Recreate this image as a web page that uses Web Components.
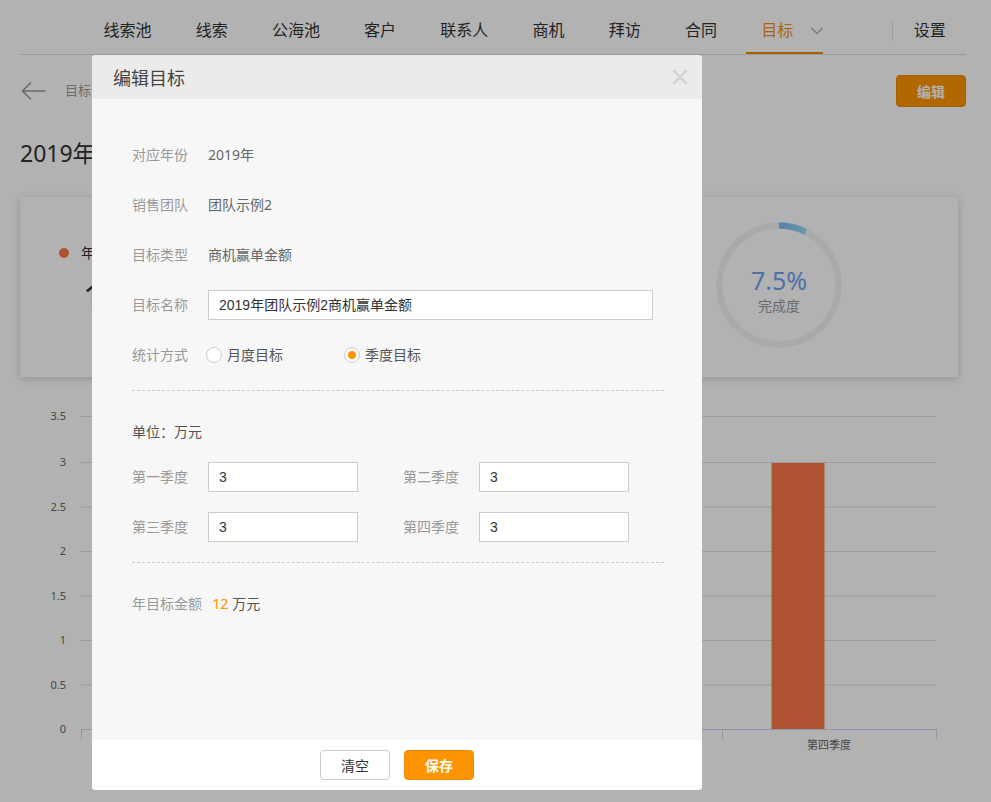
<!DOCTYPE html>
<html lang="zh-CN"><head><meta charset="utf-8"><title>目标</title>
<style>
html,body{margin:0;padding:0;background:#fff}
body{font-family:"Noto Sans","Noto Sans CJK SC",sans-serif;color:#333;width:991px;height:802px;overflow:hidden;position:relative}
</style></head><body>
<crm-page>
  <crm-nav slot="nav">
    <nav-item>线索池</nav-item><nav-item>线索</nav-item><nav-item>公海池</nav-item><nav-item>客户</nav-item><nav-item>联系人</nav-item><nav-item>商机</nav-item><nav-item>拜访</nav-item><nav-item>合同</nav-item><nav-item active>目标</nav-item>
  </crm-nav>
  <page-head></page-head>
  <summary-card></summary-card>
  <bar-chart></bar-chart>
</crm-page>
<modal-dialog heading="编辑目标">
  <form-row label="对应年份"><span class="v">2019年</span></form-row>
  <form-row label="销售团队"><span class="v">团队示例2</span></form-row>
  <form-row label="目标类型"><span class="v">商机赢单金额</span></form-row>
  <form-row label="目标名称"><text-field width="445" value="2019年团队示例2商机赢单金额"></text-field></form-row>
  <form-row label="统计方式"><radio-group></radio-group></form-row>
  <dash-line></dash-line>
  <unit-line>单位：万元</unit-line>
  <quarter-row a="第一季度" b="第二季度"></quarter-row>
  <quarter-row a="第三季度" b="第四季度"></quarter-row>
  <dash-line></dash-line>
  <total-line></total-line>
</modal-dialog>
<script>
const def=(name,html)=>customElements.define(name,class extends HTMLElement{
  connectedCallback(){ if(this.shadowRoot) return;
    const r=this.attachShadow({mode:"open"});
    r.innerHTML=typeof html==="function"?html(this):html;
  }
});
const FONT='"Noto Sans","Noto Sans CJK SC",sans-serif';
def("crm-page",`<style>:host{display:block;width:991px;height:802px;box-sizing:border-box;padding:0 25px 0 20px;overflow:hidden}
</style><slot name="nav"></slot><slot></slot>`);
def("crm-nav",`<style>:host{display:flex;align-items:stretch;height:54px;width:946px;box-sizing:content-box;border-bottom:1px solid #dcdcdc;font-size:16px;color:#333}
.items{display:flex;gap:44.2px;padding-left:83.5px}
.sep{width:1px;height:20px;background:#e6e6e6;align-self:center;margin-left:98.5px;margin-top:8px}
.set{align-self:center;margin-left:21px;margin-top:6px;line-height:24px;color:#333}
</style><div class="items"><slot></slot></div><div class="sep"></div><div class="set">设置</div>`);
def("nav-item",el=>{const a=el.hasAttribute("active");return `<style>:host{display:block;position:relative;font-size:16px;line-height:24px;padding-top:18px;color:${a?"#f7911c":"#333"}}
${a?`.u{position:absolute;left:-15.5px;width:77px;bottom:0;height:2px;background:#f08a00}.c{position:absolute;left:49px;top:27px}`:""}
:host{height:54px;box-sizing:border-box}</style><slot></slot>${a?`<svg class="c" width="14" height="8" viewBox="0 0 14 8"><path d="M1.5 1 L7 6.5 L12.5 1" fill="none" stroke="#aaa" stroke-width="1.2"/></svg><div class="u"></div>`:""}`});
def("page-head",`<style>:host{display:block;position:relative;height:122px}
.row{display:flex;align-items:center;height:32px;margin-top:20px}
svg{display:block;margin-left:1px}
.crumb{font-size:13px;line-height:18px;color:#999;margin:-2px 0 0 19px}
.sp{flex:1}
.btn{width:70px;height:32px;box-sizing:border-box;border:1px solid #f08a00;border-radius:4px;background:#fe9500;color:#fff;font-size:14px;font-weight:700;display:flex;align-items:center;justify-content:center}
h1{margin:0;font-weight:400;font-size:23px;line-height:32px;color:#333;margin-top:30px}
</style><div class="row"><svg width="25" height="20" viewBox="0 0 25 20"><path d="M24.5 10H1.5M10 1.5L1.5 10L10 18.5" fill="none" stroke="#999" stroke-width="1.6"/></svg><span class="crumb">目标</span><span class="sp"></span><div class="btn">编辑</div></div>
<h1>2019年</h1>`);
def("summary-card",`<style>:host{display:flex;width:938px;height:180px;box-sizing:border-box;background:#fff;box-shadow:0 2px 8px rgba(0,0,0,.18);position:relative}
.left{width:696px;padding:44px 0 0 39px;box-sizing:border-box}
.lbl{display:flex;align-items:center;gap:12px;font-size:14px;line-height:24px;color:#333}
.dot{width:10px;height:10px;border-radius:50%;background:#fb7848}
.num{font-size:34px;line-height:44px;color:#333;margin:10px 0 0 24px}
</style><div class="left"><div class="lbl"><span class="dot"></span>年</div><div class="num">1</div></div><progress-ring></progress-ring>`);
def("progress-ring",`<style>:host{display:block;position:relative;width:126px;height:126px;margin-top:24.5px}
svg{display:block}
.t{position:absolute;left:0;right:0;top:43px;text-align:center;font-size:25px;line-height:30px;color:#6fa4ee}
.s{position:absolute;left:0;right:0;top:73px;text-align:center;font-size:14px;line-height:22px;color:#999}
</style><svg width="126" height="126" viewBox="0 0 126 126"><defs><linearGradient id="g" x1="0" x2="1"><stop offset="0" stop-color="#7fb8f5"/><stop offset="1" stop-color="#96d8f5"/></linearGradient></defs>
<circle cx="63" cy="63" r="59.5" fill="none" stroke="#f3f3f3" stroke-width="6.5"/>
<path d="M63 3.5A59.5 59.5 0 0 1 89.7 9.8" fill="none" stroke="url(#g)" stroke-width="6.5"/></svg>
<div class="t">7.5%</div><div class="s">完成度</div>`);
def("bar-chart",()=>{
 const ys=[729,684.5,640,595.5,551,506.5,462,416],ls=["0","0.5","1","1.5","2","2.5","3","3.5"];
 const gx=ys.slice(1).map(y=>`<line x1="61" x2="916" y1="${y-396.5}" y2="${y-396.5}" stroke="#e0e0e0"/>`).join("");
 const tx=ys.map((y,i)=>`<text x="46" y="${y-396.5+3.5}" text-anchor="end">${ls[i]}</text>`).join("");
 const labels=`<text x="809" y="352" text-anchor="middle">第四季度</text>`;
 const bars=`<rect x="751.5" y="66" width="53" height="266" fill="#fb7848"/>`;
 const ticks=[61.5,702.5,916.5].map(x=>`<line x1="${x}" x2="${x}" y1="332" y2="342" stroke="#ccd6eb"/>`).join("");
 return `<style>:host{display:block;margin:19.5px 0 0 0;height:380px}svg{display:block;overflow:visible}text{font-family:${FONT};font-size:11px;fill:#666}</style>
 <svg width="938" height="380" viewBox="0 0 938 380">${gx}${bars}<line x1="61" x2="917" y1="332.5" y2="332.5" stroke="#ccd6eb"/>${ticks}${tx}${labels}</svg>`});
def("modal-dialog",el=>`<style>:host{display:block;position:fixed;inset:0;background:rgba(0,0,0,.3)}
.box{position:absolute;left:92px;top:55px;width:610px;height:735px;border-radius:4px;overflow:hidden;background:#fff;display:flex;flex-direction:column}
header{height:44px;flex:none;background:#ebebeb;display:flex;align-items:center;justify-content:space-between;padding:0 14px 0 21px;font-size:18px;color:#444}
header svg{display:block}
main{flex:1;background:#f7f7f7;padding:41px 38px 0 40px;box-sizing:border-box;display:flex;flex-direction:column;gap:20px}
footer{height:50px;flex:none;background:#fff;display:flex;justify-content:center;align-items:center;gap:14px}
</style><div class="box"><header><span>${el.getAttribute("heading")}</span><svg width="16" height="16" viewBox="0 0 16 16"><path d="M1.5 1.5L14.5 14.5M14.5 1.5L1.5 14.5" stroke="#d4d4d4" stroke-width="2.6"/></svg></header>
<main><slot></slot></main><footer><dlg-btn>清空</dlg-btn><dlg-btn primary>保存</dlg-btn></footer></div>`);
def("dlg-btn",el=>{const p=el.hasAttribute("primary");return `<style>:host{display:flex;align-items:center;justify-content:center;width:70px;height:30px;box-sizing:border-box;border-radius:4px;font-size:14px;border:1px solid ${p?"#f08a00":"#ccc"};background:${p?"#fe9500":"#fff"};color:${p?"#fff":"#333"};${p?"font-weight:700;":""}}</style><slot></slot>`});
def("form-row",el=>`<style>:host{display:flex;align-items:center;height:30px;font-size:14px;color:#666}
.l{width:56px;margin:-2px 20px 0 0;color:#999;flex:none}
::slotted(.v){color:#666;margin-top:-2px}
</style><span class="l">${el.getAttribute("label")}</span><slot></slot>`);
def("text-field",el=>`<style>:host{display:block;width:${el.getAttribute("width")}px;height:30px;box-sizing:border-box;border:1px solid #ccc;background:#fff;font:14px/28px "Liberation Sans","Noto Sans CJK SC",sans-serif;color:#333;padding-left:10px;white-space:nowrap}</style>${el.getAttribute("value")}`);
def("radio-group",`<style>:host{display:flex;margin-left:-2px;font-size:14px;color:#666}
</style><radio-option style="width:138px">月度目标</radio-option><radio-option checked>季度目标</radio-option>`);
def("radio-option",el=>`<style>:host{display:flex;align-items:center;gap:5px;color:#555}
.r{width:16px;height:16px;box-sizing:border-box;border:1px solid #ccc;border-radius:50%;background:#fff;display:flex;align-items:center;justify-content:center}
.d{width:8px;height:8px;border-radius:50%;background:#fe9500}
.x{margin-top:-2px}
</style><span class="r">${el.hasAttribute("checked")?'<span class="d"></span>':""}</span><span class="x"><slot></slot></span>`);
def("dash-line",`<style>:host{display:block;height:0;border-top:1px dashed #ccc}</style>`);
def("unit-line",`<style>:host{display:block;height:20px;line-height:20px;font-size:14px;color:#555;margin-top:11px}</style><slot></slot>`);
def("quarter-row",el=>`<style>:host{display:flex;height:30px}
form-row{width:226px;margin-right:45px}</style><form-row label="${el.getAttribute("a")}"><text-field width="150" value="3"></text-field></form-row><form-row label="${el.getAttribute("b")}"><text-field width="150" value="3"></text-field></form-row>`);
def("total-line",`<style>:host{display:flex;align-items:center;height:20px;font-size:14px;color:#999;margin-top:10px}
b{font-weight:400;color:#fe9500;font-size:15px;letter-spacing:-.5px;margin:0 4px 0 10px}i{font-style:normal;color:#555}</style>年目标金额<b>12</b><i>万元</i>`);
</script>
</body></html>
